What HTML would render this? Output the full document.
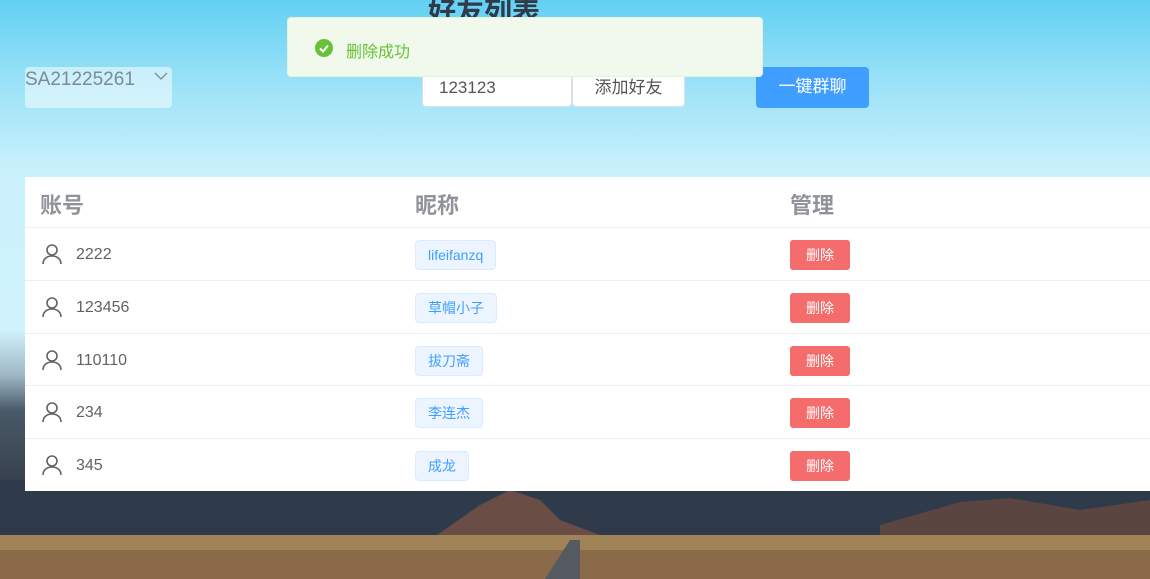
<!DOCTYPE html>
<html><head><meta charset="utf-8"><style>
*{margin:0;padding:0;box-sizing:border-box}
body{width:1150px;height:579px;overflow:hidden;position:relative;font-family:"Liberation Sans","Noto Sans CJK SC",sans-serif;
background:linear-gradient(180deg,#62d0f3 0px,#9fe3f8 90px,#c9f1fc 170px,#d0f2fc 330px,#9fb8c4 375px,#4a5a68 410px,#3a4452 470px,#3a3b44 500px);}
.mtn{position:absolute;left:0;top:480px;width:1150px;height:99px}
.title{position:absolute;left:428px;top:-9px;font-size:28px;font-weight:bold;color:#2f3b48}
.msg{position:absolute;left:287px;top:17px;width:476px;height:60px;background:#f0f9eb;border:1px solid #e1f3d8;border-radius:4px;color:#67c23a;font-size:16px}
.msg .ic{position:absolute;left:27px;top:21px;width:18px;height:18px;border-radius:50%;background:#67c23a}
.msg span{position:absolute;left:58px;top:20px}
.sel{position:absolute;left:25px;top:67px;width:147px;height:41px;background:rgba(255,255,255,.5);border-radius:4px;color:#7b8a95;font-size:19px;padding-top:2px}
.inp{position:absolute;left:422px;top:67px;width:150px;height:40px;background:#fff;border:1px solid #dcdfe6;border-radius:4px;font-size:17px;color:#555;padding:10px 0 0 16px}
.btn{position:absolute;left:572px;top:67px;width:113px;height:40px;background:#fff;border:1px solid #dcdfe6;border-radius:4px;font-size:17px;color:#555;text-align:center;line-height:40px}
.blue{position:absolute;left:756px;top:67px;width:113px;height:41px;background:#409eff;border-radius:4px;color:#fff;font-size:17px;text-align:center;line-height:40px}
.tbl{position:absolute;left:25px;top:177px;width:1125px;height:314px;background:#fff}
.row{position:absolute;left:0;width:1125px;border-bottom:1px solid #ebeef5}
.h{font-size:22px;font-weight:bold;color:#909399;position:absolute;top:11px}
.c{position:absolute;font-size:16px;color:#606266}
.tag{position:absolute;left:390px;top:12px;height:30px;padding:0 12px;background:#ecf5ff;border:1px solid #d9ecff;border-radius:4px;color:#409eff;font-size:14px;line-height:28px}
.del{position:absolute;left:765px;top:12px;width:60px;height:30px;background:#f56c6c;border-radius:3px;color:#fff;font-size:14px;text-align:center;line-height:30px}
</style></head><body>
<svg class="mtn" viewBox="0 0 1150 99" preserveAspectRatio="none">
<rect x="0" y="0" width="1150" height="99" fill="#2f3a4a"/>
<path d="M430 60 L480 25 L510 10 L540 20 L560 40 L600 55Z" fill="#6a4e46"/>
<path d="M880 45 L960 22 L1010 18 L1080 30 L1150 20 L1150 60 L880 60Z" fill="#5a4540"/>
<path d="M0 55 L1150 55 L1150 99 L0 99Z" fill="#a08458"/>
<path d="M0 70 L1150 70 L1150 99 L0 99Z" fill="#8a6a48"/>
<path d="M545 99 L570 60 L580 60 L580 99Z" fill="#555a60"/>
</svg>
<div class="title">好友列表</div>
<div class="sel">SA21225261 <svg style="position:absolute;left:129px;top:5px" width="14" height="9" viewBox="0 0 14 9"><path d="M1 1l6 6 6-6" stroke="#7b8a95" stroke-width="1.3" fill="none"/></svg></div>
<div class="inp">123123</div>
<div class="btn">添加好友</div>
<div class="blue">一键群聊</div>
<div class="tbl">
<div class="row" style="top:0;height:51px"><div class="h" style="left:15px">账号</div><div class="h" style="left:390px">昵称</div><div class="h" style="left:765px">管理</div></div>
<div class="row" style="top:51px;height:53px"><svg style="position:absolute;left:16px;top:15px" width="22" height="22" viewBox="0 0 22 22" fill="none" stroke="#606266" stroke-width="1.6"><circle cx="11" cy="7" r="5"/><path d="M2 21c0-5 4-8 9-8s9 3 9 8"/></svg><div class="c" style="left:51px;top:18px">2222</div><div class="tag">lifeifanzq</div><div class="del">删除</div></div>
<div class="row" style="top:104px;height:53px"><svg style="position:absolute;left:16px;top:15px" width="22" height="22" viewBox="0 0 22 22" fill="none" stroke="#606266" stroke-width="1.6"><circle cx="11" cy="7" r="5"/><path d="M2 21c0-5 4-8 9-8s9 3 9 8"/></svg><div class="c" style="left:51px;top:18px">123456</div><div class="tag">草帽小子</div><div class="del">删除</div></div>
<div class="row" style="top:157px;height:52px"><svg style="position:absolute;left:16px;top:15px" width="22" height="22" viewBox="0 0 22 22" fill="none" stroke="#606266" stroke-width="1.6"><circle cx="11" cy="7" r="5"/><path d="M2 21c0-5 4-8 9-8s9 3 9 8"/></svg><div class="c" style="left:51px;top:18px">110110</div><div class="tag">拔刀斋</div><div class="del">删除</div></div>
<div class="row" style="top:209px;height:53px"><svg style="position:absolute;left:16px;top:15px" width="22" height="22" viewBox="0 0 22 22" fill="none" stroke="#606266" stroke-width="1.6"><circle cx="11" cy="7" r="5"/><path d="M2 21c0-5 4-8 9-8s9 3 9 8"/></svg><div class="c" style="left:51px;top:18px">234</div><div class="tag">李连杰</div><div class="del">删除</div></div>
<div class="row" style="top:262px;height:52px;border:0"><svg style="position:absolute;left:16px;top:15px" width="22" height="22" viewBox="0 0 22 22" fill="none" stroke="#606266" stroke-width="1.6"><circle cx="11" cy="7" r="5"/><path d="M2 21c0-5 4-8 9-8s9 3 9 8"/></svg><div class="c" style="left:51px;top:18px">345</div><div class="tag">成龙</div><div class="del">删除</div></div>
</div>
<div class="msg"><div class="ic"><svg width="18" height="18" viewBox="0 0 18 18"><path d="M5 9.5l3 3 5-6" stroke="#fff" stroke-width="2" fill="none"/></svg></div><span>删除成功</span></div>
</body></html>
